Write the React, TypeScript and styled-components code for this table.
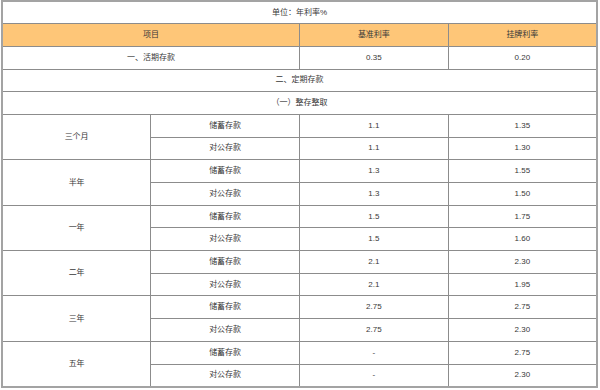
import React from "react";
import styled, { createGlobalStyle } from "styled-components";

const Global = createGlobalStyle`
  html, body { margin: 0; padding: 0; background: #fff; }
  body { font-family: "Liberation Sans", "Noto Sans CJK SC", sans-serif; }
`;

const Page = styled.div`
  padding: 0 0 0 1px;
`;

const Table = styled.table`
  width: 597px;
  border-collapse: collapse;
  table-layout: fixed;
  border: 2px solid #a3a3a3;
  font-size: 8px;
  color: #383838;
`;

const Row = styled.tr`
  height: 22.7px;
`;

const Cell = styled.td<{ $head?: boolean }>`
  border: 1px solid #8c8c8c;
  padding: 0;
  text-align: center;
  vertical-align: middle;
  background: ${(p) => (p.$head ? "#fec678" : "#fff")};
  line-height: 1;
`;

const groups: { term: string; rows: [string, string, string][] }[] = [
  { term: "三个月", rows: [["储蓄存款", "1.1", "1.35"], ["对公存款", "1.1", "1.30"]] },
  { term: "半年", rows: [["储蓄存款", "1.3", "1.55"], ["对公存款", "1.3", "1.50"]] },
  { term: "一年", rows: [["储蓄存款", "1.5", "1.75"], ["对公存款", "1.5", "1.60"]] },
  { term: "二年", rows: [["储蓄存款", "2.1", "2.30"], ["对公存款", "2.1", "1.95"]] },
  { term: "三年", rows: [["储蓄存款", "2.75", "2.75"], ["对公存款", "2.75", "2.30"]] },
  { term: "五年", rows: [["储蓄存款", "-", "2.75"], ["对公存款", "-", "2.30"]] },
];

export default function App() {
  return (
    <Page>
      <Global />
      <Table>
        <colgroup>
          <col style={{ width: "25%" }} />
          <col style={{ width: "25%" }} />
          <col style={{ width: "25%" }} />
          <col style={{ width: "25%" }} />
        </colgroup>
        <tbody>
          <Row>
            <Cell colSpan={4}>单位：年利率%</Cell>
          </Row>
          <Row>
            <Cell $head colSpan={2}>项目</Cell>
            <Cell $head>基准利率</Cell>
            <Cell $head>挂牌利率</Cell>
          </Row>
          <Row>
            <Cell colSpan={2}>一、活期存款</Cell>
            <Cell>0.35</Cell>
            <Cell>0.20</Cell>
          </Row>
          <Row>
            <Cell colSpan={4}>二、定期存款</Cell>
          </Row>
          <Row>
            <Cell colSpan={4}>（一）整存整取</Cell>
          </Row>
          {groups.map((g) =>
            g.rows.map((r, i) => (
              <Row key={g.term + i}>
                {i === 0 && <Cell rowSpan={2}>{g.term}</Cell>}
                <Cell>{r[0]}</Cell>
                <Cell>{r[1]}</Cell>
                <Cell>{r[2]}</Cell>
              </Row>
            ))
          )}
        </tbody>
      </Table>
    </Page>
  );
}
